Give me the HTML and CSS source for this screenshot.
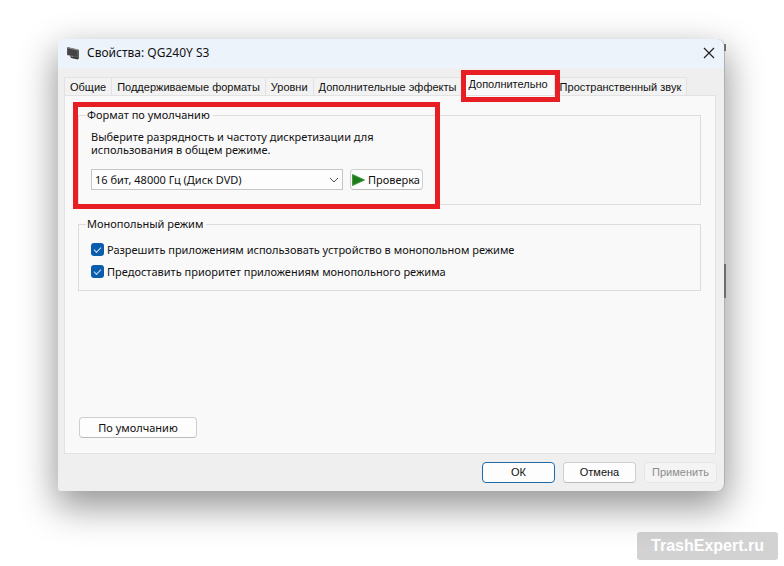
FILE: index.html
```html
<!DOCTYPE html>
<html lang="ru">

<head>
  <meta charset="UTF-8" />
  <meta name="viewport" content="width=device-width, initial-scale=1" />
  <title>Свойства: QG240Y S3</title>
  <link rel="stylesheet" href="styles.css">
</head>

<body>
  <main class="window">
    <header class="title-bar">
      <svg class="device-icon" viewBox="0 0 14 14" aria-hidden="true">
        <path d="M1 1 L12 3.5 L13 4 V13 L7 11.5 V10.5 L1 9 Z" fill="#5a5a5a" />
        <path d="M2 2.5 L11 4.5 V10.5 L2 8.5 Z" fill="#444" />
        <path d="M1 1 L12 3.5 V4.5 L1 2 Z" fill="#8c8c8c" />
        <path d="M4 10 L12 12 V13.5 L5 12 Z" fill="#333" />
      </svg>
      <h1 class="title">Свойства: QG240Y S3</h1>
      <button class="close" type="button" aria-label="Закрыть">
        <svg viewBox="0 0 12 12" aria-hidden="true">
          <path d="M1 1 L11 11 M11 1 L1 11" fill="none" stroke="#222" stroke-width="1.2" />
        </svg>
      </button>
    </header>

    <nav class="tabs">
      <a class="tab" href="#general">Общие</a>
      <a class="tab" href="#formats">Поддерживаемые форматы</a>
      <a class="tab" href="#levels">Уровни</a>
      <a class="tab" href="#effects">Дополнительные эффекты</a>
      <a class="tab tab-active" href="#advanced" aria-current="page">Дополнительно</a>
      <a class="tab" href="#spatial">Пространственный звук</a>
    </nav>

    <section class="panel" id="advanced">
      <fieldset class="group group-format">
        <legend>Формат по умолчанию</legend>
        <label class="hint" for="format">Выберите разрядность и частоту дискретизации для использования в общем режиме.</label>
        <div class="format-row">
          <div class="select-wrap">
            <select class="select" id="format">
              <option>16 бит, 48000 Гц (Диск DVD)</option>
            </select>
            <svg class="chevron" viewBox="0 0 10 6" aria-hidden="true">
              <path d="M1 1 L5 5 L9 1" fill="none" stroke="#555" />
            </svg>
          </div>
          <button class="btn btn-test" type="button">
            <svg class="play" viewBox="0 0 13 12" aria-hidden="true">
              <path d="M0.5 0.5 L12.5 6 L0.5 11.5 Z" fill="#1d7a1d" stroke="#3d993d" />
            </svg>
            Проверка
          </button>
        </div>
      </fieldset>

      <fieldset class="group group-exclusive">
        <legend>Монопольный режим</legend>
        <label class="check">
          <input type="checkbox" checked>
          Разрешить приложениям использовать устройство в монопольном режиме
        </label>
        <label class="check">
          <input type="checkbox" checked>
          Предоставить приоритет приложениям монопольного режима
        </label>
      </fieldset>

      <button class="btn btn-reset" type="button">По умолчанию</button>
    </section>

    <footer class="actions">
      <button class="btn btn-action btn-primary" type="button">ОК</button>
      <button class="btn btn-action" type="button">Отмена</button>
      <button class="btn btn-action" type="button" disabled>Применить</button>
    </footer>
  </main>

  <a class="watermark" href="#top">TrashExpert.ru</a>
</body>

</html>
```

FILE: styles.css
```css
*,
*::before,
*::after {
  margin: 0;
  padding: 0;
  box-sizing: border-box;
}

body {
  display: flex;
  flex-direction: column;
  min-height: 100vh;
  padding: 39px 6px 6px;
  background: #fff;
  color: #111;
  font: 11px/13px "Noto Sans", "Open Sans", sans-serif;
}

button,
select {
  font: inherit;
  color: inherit;
}

.window {
  position: relative;
  margin: 0 53px 0 52px;
  padding-bottom: 8px;
  background: #efefef;
  border-right: 1px solid #b0b0b0;
  border-radius: 2px 8px 8px 3px;
  box-shadow: 0 14px 36px 2px rgba(0, 0, 0, 0.42);
}

/* parts of the window behind, sticking out on the right */
.window::before,
.window::after {
  content: "";
  position: absolute;
  right: -2px;
  width: 2px;
  background: #6d6d6d;
}

.window::before {
  top: 5px;
  height: 7px;
}

.window::after {
  top: 225px;
  height: 34px;
}

.title-bar {
  display: flex;
  align-items: center;
  gap: 7px;
  height: 29px;
  padding: 0 9px 2px 8px;
  background: #edf3fb;
  border-radius: 2px 8px 0 0;
}

.device-icon {
  width: 14px;
  height: 14px;
}

.title {
  flex: 1;
  font-size: 12px;
  font-weight: 400;
}

.close {
  display: flex;
  background: none;
  border: 0;
}

.close svg {
  width: 12px;
  height: 12px;
}

.tabs {
  display: flex;
  align-items: flex-end;
  margin: 6px 6px 0;
}

.tab {
  height: 18px;
  padding: 0 5px;
  border: 1px solid #e2e2e2;
  border-left: 0;
  border-bottom: 0;
  background: #f2f2f2;
  color: #111;
  font: 11px/19px "Liberation Sans", Arial, sans-serif;
  text-decoration: none;
  white-space: nowrap;
}

.tab:first-child {
  border-left: 1px solid #e2e2e2;
}

.tab-active {
  position: relative;
  height: 21px;
  padding: 0 6px;
  background: #f9f9f9;
}

/* red frames around the tab and the format box */
.tab-active::after,
.group-format::after {
  content: "";
  position: absolute;
  border: 5px solid #e81e25;
}

.tab-active::after {
  inset: -5px -6px -7px -1px;
}

.panel {
  margin: 0 8px 0 6px;
  padding: 11px 14px 15px 13px;
  background: #f9f9f9;
  border: 1px solid #e2e2e2;
}

.group {
  position: relative;
  border: 1px solid #dcdcdc;
  padding: 0 12px;
}

.group legend {
  margin-left: -5px;
  padding: 0 3px 0 1px;
  line-height: 16px;
}

.group-format {
  padding-bottom: 14px;
}

.group-format::after {
  top: -21px;
  left: -6px;
  width: 367px;
  height: 107px;
}

.hint {
  display: block;
  width: 300px;
  margin-top: 7px;
}

.format-row {
  display: flex;
  gap: 7px;
  margin-top: 13px;
}

.select-wrap {
  position: relative;
  width: 252px;
}

.select {
  width: 100%;
  height: 21px;
  padding: 0 3px;
  appearance: none;
  background: #fdfdfd;
  border: 1px solid #c6c6c6;
}

.chevron {
  position: absolute;
  top: 8px;
  right: 4px;
  width: 10px;
  height: 6px;
  pointer-events: none;
}

.btn {
  height: 21px;
  background: #fdfdfd;
  border: 1px solid #cfcfcf;
  border-bottom-color: #bbb;
  border-radius: 4px;
}

.btn-test {
  display: flex;
  align-items: center;
  gap: 3px;
  width: 73px;
  padding-left: 1px;
  white-space: nowrap;
}

.play {
  flex: none;
  width: 13px;
  height: 12px;
}

.group-exclusive {
  margin-top: 11px;
  padding-top: 11px;
  padding-bottom: 12px;
}

.check {
  display: flex;
  align-items: center;
  gap: 3px;
}

.check + .check {
  margin-top: 9px;
}

.check input {
  display: grid;
  place-items: center;
  width: 13px;
  height: 13px;
  appearance: none;
  background: #0a5cad;
  border-radius: 3px;
}

.check input:checked::before {
  content: "";
  width: 7px;
  height: 4px;
  border: solid #cfe2f5;
  border-width: 0 0 1px 1px;
  transform: translateY(-1px) rotate(-45deg);
}

.btn-reset {
  display: block;
  width: 118px;
  margin-left: 1px;
  margin-top: 126px;
}

.actions {
  display: flex;
  justify-content: flex-end;
  gap: 8px;
  padding: 8px 7px 0;
}

.btn-action {
  width: 73px;
  font-family: "Liberation Sans", Arial, sans-serif;
}

.btn.btn-primary {
  border-color: #1f6aa5;
}

.btn:disabled {
  background: #f4f4f4;
  border-color: #e6e6e6;
  color: #8c8c8c;
}

.watermark {
  align-self: flex-end;
  margin-top: auto;
  padding: 0 14px;
  background: #d2d2d2;
  border-radius: 3px;
  color: #fff;
  font: bold 16px/28px "Liberation Sans", Arial, sans-serif;
  text-decoration: none;
}
```
